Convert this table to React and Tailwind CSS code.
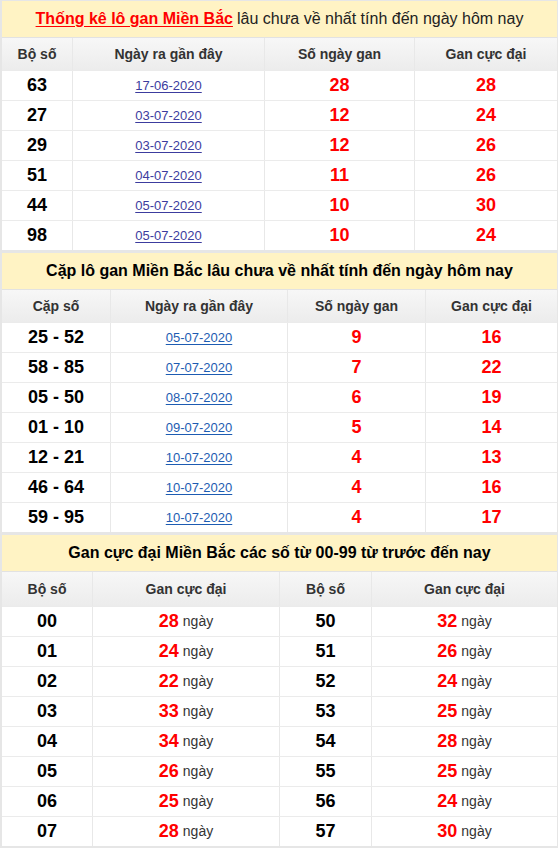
import React from "react";

const loGan = [
  ["63", "17-06-2020", "28", "28"],
  ["27", "03-07-2020", "12", "24"],
  ["29", "03-07-2020", "12", "26"],
  ["51", "04-07-2020", "11", "26"],
  ["44", "05-07-2020", "10", "30"],
  ["98", "05-07-2020", "10", "24"],
];

const capGan = [
  ["25 - 52", "05-07-2020", "9", "16"],
  ["58 - 85", "07-07-2020", "7", "22"],
  ["05 - 50", "08-07-2020", "6", "19"],
  ["01 - 10", "09-07-2020", "5", "14"],
  ["12 - 21", "10-07-2020", "4", "13"],
  ["46 - 64", "10-07-2020", "4", "16"],
  ["59 - 95", "10-07-2020", "4", "17"],
];

const ganMax = [
  ["00", "28", "50", "32"],
  ["01", "24", "51", "26"],
  ["02", "22", "52", "24"],
  ["03", "33", "53", "25"],
  ["04", "34", "54", "28"],
  ["05", "26", "55", "25"],
  ["06", "25", "56", "24"],
  ["07", "28", "57", "30"],
];

const cell = "flex items-center justify-center border-l border-[#e8e8e8] first:border-l-0";
const headRow =
  "grid border-t border-[#e2e2e2] bg-gradient-to-b from-[#f7f7f7] to-[#ececec] text-[14px] font-bold text-[#333]";
const dataRow = "grid h-[30px] border-t border-[#ebebeb] bg-white";

function Title({ children }) {
  return (
    <div className="flex h-[36px] items-center justify-center bg-[#fff3c4] text-[16px] font-bold text-black">
      {children}
    </div>
  );
}

function Box({ children }) {
  return <div className="border-t border-r border-l-2 border-b-2 border-[#e6e6e6]">{children}</div>;
}

export default function App() {
  const cols1 = "grid-cols-[70px_192px_150px_1fr]";
  const cols2 = "grid-cols-[108px_177px_138px_1fr]";
  const cols3 = "grid-cols-[90px_187px_92px_1fr]";

  return (
    <div className="w-[558px] bg-white" style={{ fontFamily: '"Liberation Sans", Arial, sans-serif' }}>
      <Box>
        <Title>
          <span className="text-[#ff0000] underline underline-offset-2">Thống kê lô gan Miền Bắc</span>
          <span className="ml-1 font-normal text-[#222]">lâu chưa về nhất tính đến ngày hôm nay</span>
        </Title>
        <div className={`${headRow} ${cols1} h-[33px]`}>
          <div className={cell}>Bộ số</div>
          <div className={cell}>Ngày ra gần đây</div>
          <div className={cell}>Số ngày gan</div>
          <div className={cell}>Gan cực đại</div>
        </div>
        {loGan.map((r, i) => (
          <div key={i} className={`${dataRow} ${cols1}`}>
            <div className={`${cell} text-[18px] font-bold text-black`}>{r[0]}</div>
            <div className={cell}>
              <a href="#" className="text-[13px] text-[#3c3c9e] underline underline-offset-2">
                {r[1]}
              </a>
            </div>
            <div className={`${cell} text-[18px] font-bold text-[#ff0000]`}>{r[2]}</div>
            <div className={`${cell} text-[18px] font-bold text-[#ff0000]`}>{r[3]}</div>
          </div>
        ))}
      </Box>

      <Box>
        <Title>Cặp lô gan Miền Bắc lâu chưa về nhất tính đến ngày hôm nay</Title>
        <div className={`${headRow} ${cols2} h-[33px]`}>
          <div className={cell}>Cặp số</div>
          <div className={cell}>Ngày ra gần đây</div>
          <div className={cell}>Số ngày gan</div>
          <div className={cell}>Gan cực đại</div>
        </div>
        {capGan.map((r, i) => (
          <div key={i} className={`${dataRow} ${cols2}`}>
            <div className={`${cell} text-[18px] font-bold text-black`}>{r[0]}</div>
            <div className={cell}>
              <a href="#" className="text-[13px] text-[#1d5cb2] underline underline-offset-2">
                {r[1]}
              </a>
            </div>
            <div className={`${cell} text-[18px] font-bold text-[#ff0000]`}>{r[2]}</div>
            <div className={`${cell} text-[18px] font-bold text-[#ff0000]`}>{r[3]}</div>
          </div>
        ))}
      </Box>

      <Box>
        <Title>Gan cực đại Miền Bắc các số từ 00-99 từ trước đến nay</Title>
        <div className={`${headRow} ${cols3} h-[35px]`}>
          <div className={cell}>Bộ số</div>
          <div className={cell}>Gan cực đại</div>
          <div className={cell}>Bộ số</div>
          <div className={cell}>Gan cực đại</div>
        </div>
        {ganMax.map((r, i) => (
          <div key={i} className={`${dataRow} ${cols3}`}>
            <div className={`${cell} text-[18px] font-bold text-black`}>{r[0]}</div>
            <div className={cell}>
              <span className="text-[18px] font-bold text-[#ff0000]">{r[1]}</span>
              <span className="ml-1 text-[14px] text-[#333]">ngày</span>
            </div>
            <div className={`${cell} text-[18px] font-bold text-black`}>{r[2]}</div>
            <div className={cell}>
              <span className="text-[18px] font-bold text-[#ff0000]">{r[3]}</span>
              <span className="ml-1 text-[14px] text-[#333]">ngày</span>
            </div>
          </div>
        ))}
      </Box>
    </div>
  );
}
